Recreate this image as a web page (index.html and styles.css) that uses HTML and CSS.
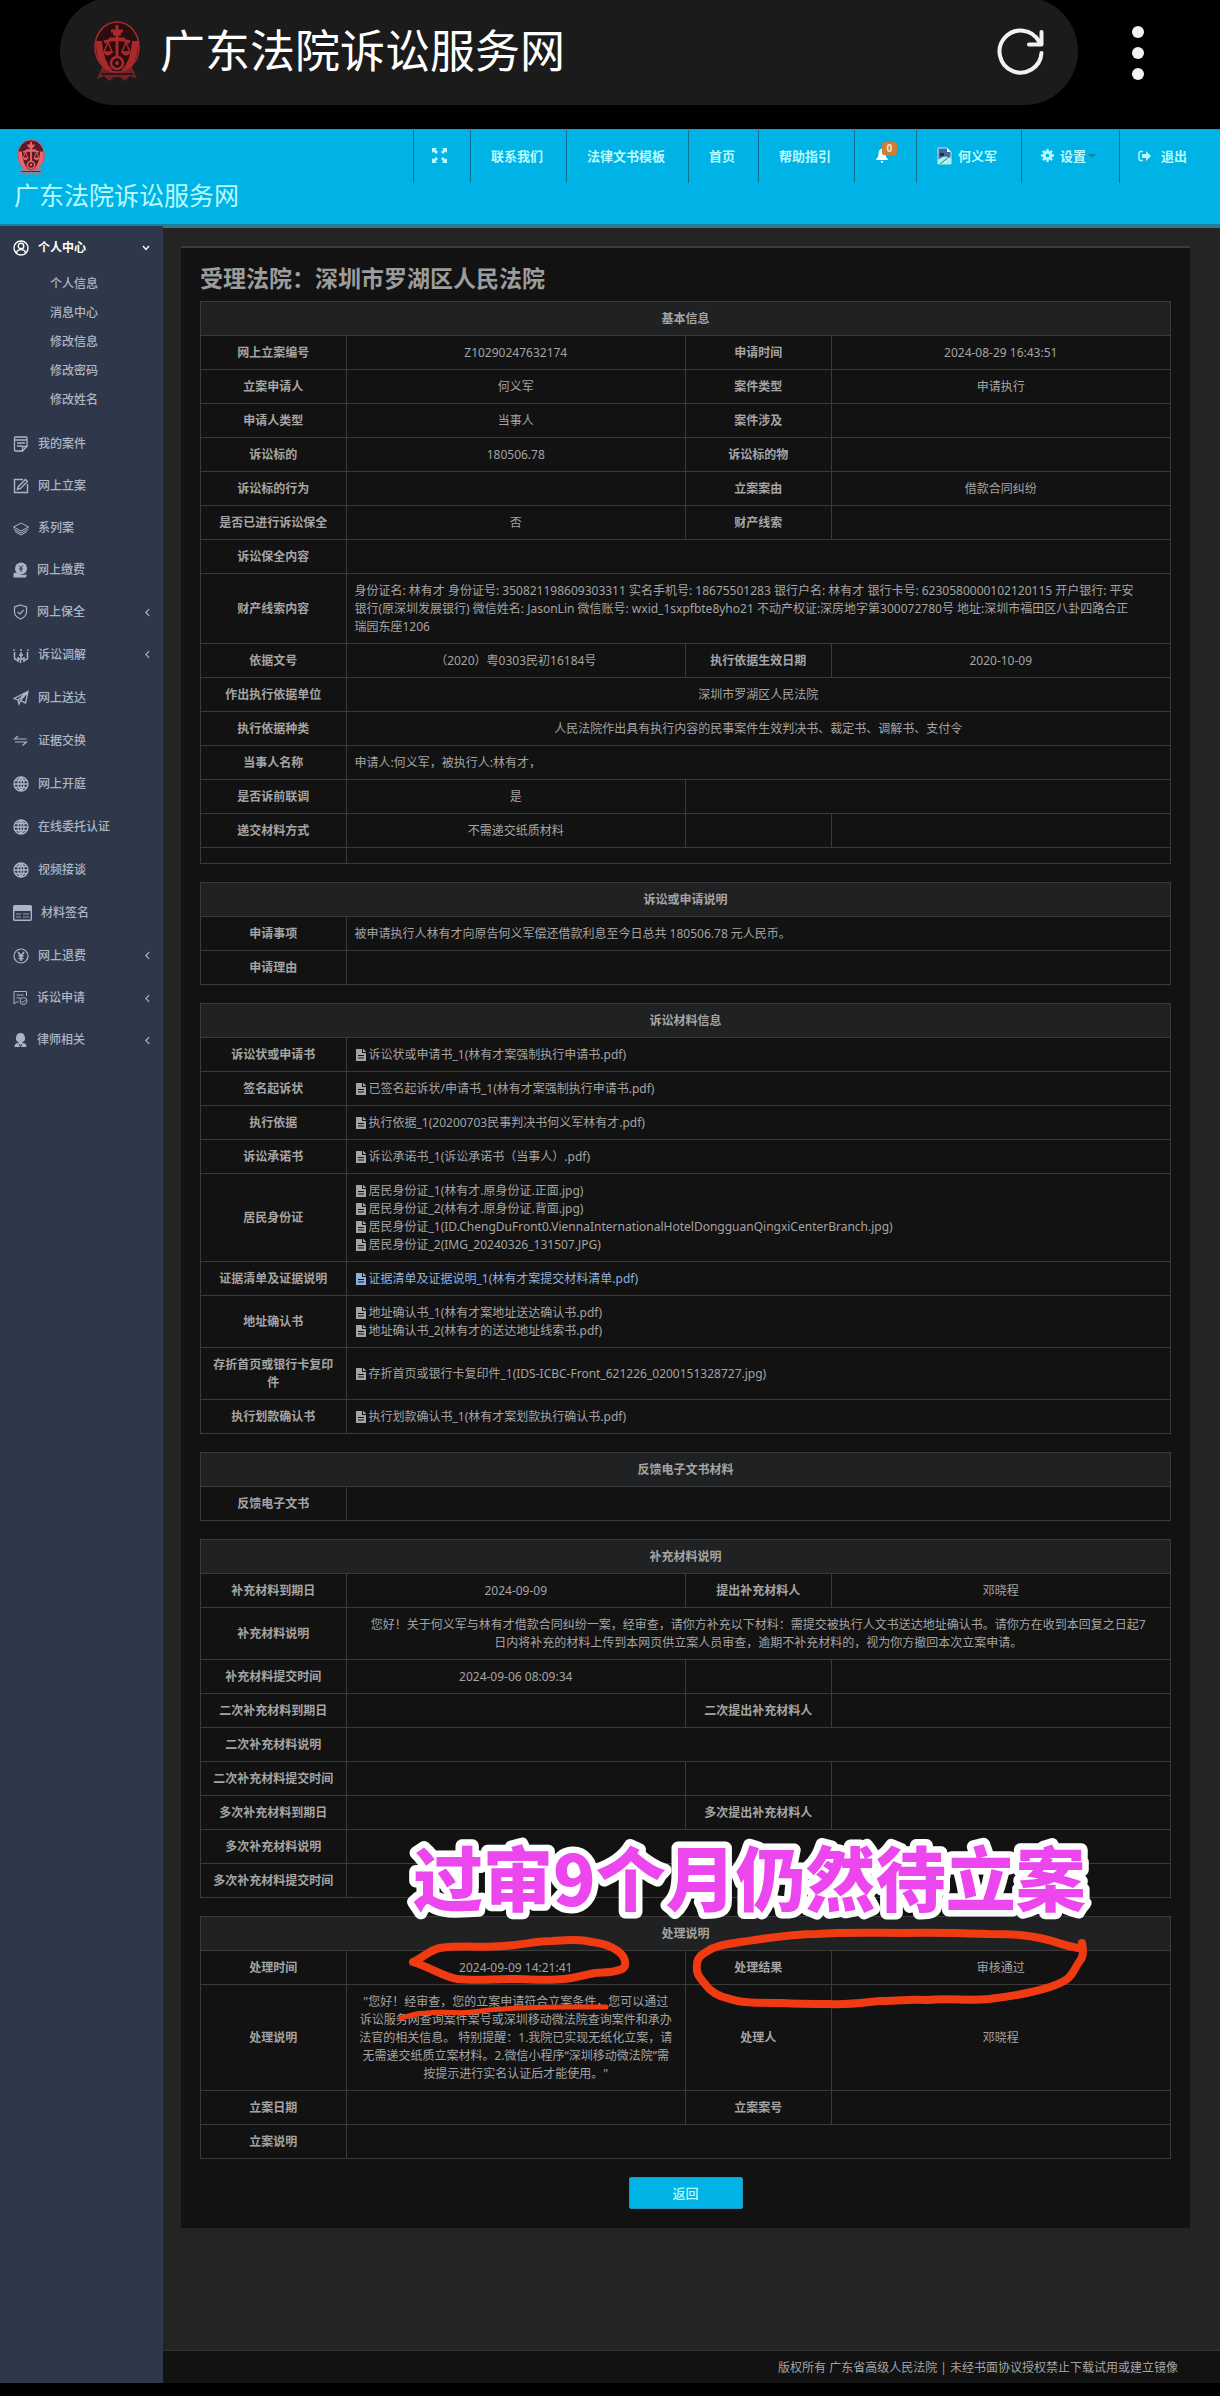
FILE: index.html
```html
<!DOCTYPE html>
<html lang="zh-CN">
<head>
<meta charset="utf-8">
<title>广东法院诉讼服务网</title>
<meta name="viewport" content="width=device-width, initial-scale=1">
<link rel="stylesheet" href="styles.css">
</head>
<body>
<svg width="0" height="0" class="defs" aria-hidden="true">
  <symbol id="emblem" viewBox="0 0 50 64">
    <path d="M10 48 L5 60 L12 57 L17 62 L22 58 H28 L33 62 L38 57 L45 60 L40 48Z" fill="currentColor" opacity=".6"/>
    <ellipse cx="25" cy="28" rx="22" ry="25" class="ground" stroke="currentColor" stroke-width="1.5"/>
    <path d="M4 22 Q3 48 21 52 Q11 42 10 22Z M46 22 Q47 48 29 52 Q39 42 40 22Z" fill="currentColor"/>
    <path d="M25 6 V42 M19 12 H31 M17 20 H33 M12 23 Q25 18 38 23 M21 15 H29" stroke="currentColor" stroke-width="3" fill="none"/>
    <path d="M16 23 L12 33 H20Z M34 23 L30 33 H38Z" stroke="currentColor" stroke-width="1.5" fill="none"/>
    <path d="M11 33 H21 Q16 40 11 33Z M29 33 H39 Q34 40 29 33Z" fill="currentColor"/>
    <circle cx="25" cy="44" r="6" class="ground" stroke="currentColor" stroke-width="2.5"/>
    <circle cx="25" cy="44" r="2" fill="currentColor"/>
    <path d="M9 55 H41" class="seam" stroke-width="1.5" fill="none"/>
  </symbol>
  <symbol id="file" viewBox="0 0 12 14">
    <path d="M1 1H7V5H11V13H1Z M8 0.6L11.4 4H8Z" fill="currentColor"/>
    <path d="M3 7.5H9M3 10H9" stroke="#121212" stroke-width="1"/>
  </symbol>
  <symbol id="globe" viewBox="0 0 16 16">
    <path d="M8 1a7 7 0 1 0 0 14A7 7 0 0 0 8 1ZM1 8H15M2 4.5H14M2 11.5H14M8 1V15M8 1C4 4 4 12 8 15M8 1C12 4 12 12 8 15" fill="none" stroke="currentColor" stroke-width="1.3"/>
  </symbol>
  <symbol id="chev" viewBox="0 0 6 10"><path d="M5 1L1 5L5 9" fill="none" stroke="currentColor" stroke-width="1.4"/></symbol>
</svg>

<div class="browser">
  <div class="pill">
    <svg class="fav"><use href="#emblem"/></svg>
    <span class="site">广东法院诉讼服务网</span>
    <button class="plain" aria-label="刷新">
      <svg width="50" height="50" viewBox="0 0 50 50" fill="none" stroke="#f2f2f2" stroke-width="4" stroke-linecap="round" stroke-linejoin="round"><path d="M45.500 27A21 21 0 1 1 43 15.500M45.500 6V18.500H33"/></svg>
    </button>
  </div>
  <button class="plain more" aria-label="菜单">
    <svg width="14" height="56" viewBox="0 0 14 56" fill="#f2f2f2"><circle cx="7" cy="7" r="6"/><circle cx="7" cy="28" r="6"/><circle cx="7" cy="49" r="6"/></svg>
  </button>
</div>

<header class="top">
  <a class="brand" href="#">
    <svg class="logo"><use href="#emblem"/></svg>
    <span>广东法院诉讼服务网</span>
  </a>
  <nav class="menu">
    <a href="#" class="full" aria-label="全屏"><svg width="15" height="15" viewBox="0 0 15 15" fill="currentColor"><path d="M0 0H5L3.500 1.500L6 4L4 6L1.500 3.500L0 5ZM15 0H10L11.500 1.500L9 4L11 6L13.500 3.500L15 5ZM0 15H5L3.500 13.500L6 11L4 9L1.500 11.500L0 10ZM15 15H10L11.500 13.500L9 11L11 9L13.500 11.500L15 10Z"/></svg></a>
    <a href="#">联系我们</a>
    <a href="#">法律文书模板</a>
    <a href="#">首页</a>
    <a href="#">帮助指引</a>
    <a href="#" class="bell" aria-label="消息"><svg width="14" height="15" viewBox="0 0 14 15" fill="currentColor"><path d="M7 0.500C9.500 1 10.500 3 10.500 6C10.500 9 12 10.500 13.500 12H0.500C2 10.500 3.500 9 3.500 6C3.500 3 4.500 1 7 0.500ZM5.500 13H8.500Q8 15 7 15T5.500 13Z"/></svg><span class="badge">0</span></a>
    <a href="#" class="user"><svg width="18" height="18" viewBox="0 0 18 18"><path d="M3 1H12L16 5V17H3Z" fill="#41679c" stroke="#b5f4f8"/><path d="M12 1V5H16Z" fill="#fff"/><path d="M5 6H9V9H5Z" fill="#14315e"/><path d="M3 13Q9 7 16 11V17H3Z" fill="#a9f4ee"/><path d="M5 17L15 9" stroke="#2b7d99"/></svg>何义军</a>
    <a href="#" class="set"><svg width="13" height="13" viewBox="0 0 14 14"><circle cx="7" cy="7" r="3.500" fill="none" stroke="currentColor" stroke-width="3"/><path d="M7 0V3M7 11V14M0 7H3M11 7H14M2 2L4 4M10 10L12 12M12 2L10 4M2 12L4 10" stroke="currentColor" stroke-width="2.600"/></svg>设置<i class="caret"></i></a>
    <a href="#" class="exit"><svg width="13" height="12" viewBox="0 0 13 12"><path d="M5 1.500H2.500Q1 1.500 1 3V9Q1 10.500 2.500 10.500H5" fill="none" stroke="currentColor" stroke-width="1.400"/><path d="M4 4H8V1L13 6L8 11V8H4Z" fill="currentColor"/></svg>退出</a>
  </nav>
</header>

<div class="layout">
  <aside class="side">
    <ul class="nav">
      <li class="open"><a href="#"><svg class="ic" viewBox="0 0 16 16" fill="none" stroke="currentColor" stroke-width="1.400"><circle cx="8" cy="8" r="7"/><circle cx="8" cy="6" r="2.800"/><path d="M3.500 13C4 8.500 12 8.500 12.500 13"/></svg>个人中心<svg class="down" viewBox="0 0 8 6"><path d="M1 1L4 4.500L7 1" fill="none" stroke="currentColor" stroke-width="1.300"/></svg></a>
        <ul class="sub">
          <li><a href="#">个人信息</a></li>
          <li><a href="#">消息中心</a></li>
          <li><a href="#">修改信息</a></li>
          <li><a href="#">修改密码</a></li>
          <li><a href="#">修改姓名</a></li>
        </ul>
      </li>
      <li><a href="#"><svg class="ic" viewBox="0 0 16 16" fill="none" stroke="currentColor" stroke-width="1.300"><path d="M10 15H2.500Q1.500 15 1.500 14V2Q1.500 1 2.500 1H13Q14 1 14 2V10.500M1.500 4H14M4 7H12M4 10H9M9.500 15L14 10.500H9.500Z"/></svg>我的案件</a></li>
      <li><a href="#"><svg class="ic" viewBox="0 0 16 16" fill="none" stroke="currentColor" stroke-width="1.400"><path d="M10 1.500H1.500V14.500H14.500V6M4.500 11.500L5.500 8.500L12.500 1.500L14.500 3.500L7.500 10.500Z"/></svg>网上立案</a></li>
      <li><a href="#"><svg class="ic" viewBox="0 0 16 16" fill="none" stroke="currentColor"><path d="M8 3L15.500 7L8 11L.5 7ZM.5 9L8 13L15.500 9M2 11.500L8 15L14 11.500"/></svg>系列案</a></li>
      <li><a href="#"><svg class="ic narrow" viewBox="0 0 14 16"><circle cx="7.500" cy="6.500" r="6" fill="currentColor"/><path d="M5.500 3.500L7.500 6L9.500 3.500M7.500 6V10M5.500 7H9.500" fill="none" stroke="#2f384a"/><path d="M0 11Q4 10 8 13L13 12.500Q14 14 12 15.500H0Z" fill="currentColor"/></svg>网上缴费</a></li>
      <li><a href="#"><svg class="ic narrow" viewBox="0 0 14 16" fill="none" stroke="currentColor" stroke-width="1.200"><path d="M7 1L13 3V8Q13 12.500 7 15Q1 12.500 1 8V3ZM4 8L6.500 10L10 6"/></svg>网上保全<svg class="left"><use href="#chev"/></svg></a></li>
      <li class="tall"><a href="#"><svg class="ic" viewBox="0 0 16 16" fill="none" stroke="currentColor" stroke-width="1.500"><path d="M1.500 5V11Q1.500 13 5 13V15M14.500 5V11Q14.500 13 11 13V15M5 10V12H11V10M8 5V12M6 8H10M7.500 13V16M1 2.500V4M15 2.500V4M8 2V4"/></svg>诉讼调解<svg class="left"><use href="#chev"/></svg></a></li>
      <li class="tall"><a href="#"><svg class="ic" viewBox="0 0 16 16" fill="none" stroke="currentColor" stroke-width="1.300"><path d="M1 8.500L15 1.500L12.500 13L7.500 10.500L6 14L5 10ZM5 10L15 1.500L7.500 10.500"/></svg>网上送达</a></li>
      <li class="tall"><a href="#"><svg class="ic" viewBox="0 0 16 16" fill="none" stroke="currentColor" stroke-width="1.200"><path d="M13.500 6H1.500L5 3M2 9H13.500L9.500 12.500"/></svg>证据交换</a></li>
      <li class="tall"><a href="#"><svg class="ic"><use href="#globe"/></svg>网上开庭</a></li>
      <li class="tall"><a href="#"><svg class="ic"><use href="#globe"/></svg>在线委托认证</a></li>
      <li class="tall"><a href="#"><svg class="ic"><use href="#globe"/></svg>视频接谈</a></li>
      <li class="tall"><a href="#"><svg class="ic wide" viewBox="0 0 19 16"><rect x=".7" y=".7" width="17.600" height="14.600" rx="1" fill="none" stroke="currentColor" stroke-width="1.400"/><path d="M0 1H19V6H0Z" fill="currentColor"/><path d="M3 9H8M10 9H16M3 12H8M10 12H16" stroke="currentColor" stroke-width=".8"/></svg>材料签名</a></li>
      <li class="tall"><a href="#"><svg class="ic" viewBox="0 0 16 16" fill="none" stroke="currentColor" stroke-width="1.200"><circle cx="8" cy="8" r="7"/><path d="M5 4L8 8L11 4M8 8V13M5.500 8H10.500M5.500 10.500H10.500" stroke-width="1.600"/></svg>网上退费<svg class="left"><use href="#chev"/></svg></a></li>
      <li><a href="#"><svg class="ic narrow" viewBox="0 0 14 16" fill="none" stroke="currentColor"><path d="M13 6V1.500H.5V14L3 12H5M3 5H10M3 8H7"/><circle cx="10" cy="11" r="3.500"/><path d="M8 11L9.500 12.500L12 10"/></svg>诉讼申请<svg class="left"><use href="#chev"/></svg></a></li>
      <li><a href="#"><svg class="ic narrow" viewBox="0 0 14 16" fill="currentColor"><path d="M7 1Q11 1 11.500 6Q12 9 9 10V11Q13 11 13 15H1Q1 11 5 11V10Q2 9 2.500 6Q3 1 7 1Z"/><path d="M5.500 12L7 15L8.500 12" fill="none" stroke="#2f384a"/></svg>律师相关<svg class="left"><use href="#chev"/></svg></a></li>
    </ul>
  </aside>

  <div class="content">
    <main class="panel">
      <h1>受理法院：深圳市罗湖区人民法院</h1>

      <table class="info">
        <colgroup><col class="k"><col class="v"><col class="k"><col class="v"></colgroup>
        <thead><tr><th colspan="4">基本信息</th></tr></thead>
        <tbody>
        <tr><th>网上立案编号</th><td>Z10290247632174</td><th>申请时间</th><td>2024-08-29 16:43:51</td></tr>
        <tr><th>立案申请人</th><td>何义军</td><th>案件类型</th><td>申请执行</td></tr>
        <tr><th>申请人类型</th><td>当事人</td><th>案件涉及</th><td></td></tr>
        <tr><th>诉讼标的</th><td>180506.78</td><th>诉讼标的物</th><td></td></tr>
        <tr><th>诉讼标的行为</th><td></td><th>立案案由</th><td>借款合同纠纷</td></tr>
        <tr><th>是否已进行诉讼保全</th><td>否</td><th>财产线索</th><td></td></tr>
        <tr><th>诉讼保全内容</th><td colspan="3"></td></tr>
        <tr><th>财产线索内容</th><td colspan="3" class="l">身份证名: 林有才 身份证号: 350821198609303311 实名手机号: 18675501283 银行户名: 林有才 银行卡号: 6230580000102120115 开户银行: 平安<br>银行(原深圳发展银行) 微信姓名: JasonLin 微信账号: wxid_1sxpfbte8yho21 不动产权证:深房地字第300072780号 地址:深圳市福田区八卦四路合正<br>瑞园东座1206</td></tr>
        <tr><th>依据文号</th><td>（2020）粤0303民初16184号</td><th>执行依据生效日期</th><td>2020-10-09</td></tr>
        <tr><th>作出执行依据单位</th><td colspan="3">深圳市罗湖区人民法院</td></tr>
        <tr><th>执行依据种类</th><td colspan="3">人民法院作出具有执行内容的民事案件生效判决书、裁定书、调解书、支付令</td></tr>
        <tr><th>当事人名称</th><td colspan="3" class="l">申请人:何义军，被执行人:林有才，</td></tr>
        <tr><th>是否诉前联调</th><td>是</td><td colspan="2"></td></tr>
        <tr><th>递交材料方式</th><td>不需递交纸质材料</td><th></th><td></td></tr>
        <tr class="slim"><th></th><td colspan="3"></td></tr>
        </tbody>
      </table>

      <table class="info">
        <colgroup><col class="k"><col></colgroup>
        <thead><tr><th colspan="2">诉讼或申请说明</th></tr></thead>
        <tbody>
        <tr><th>申请事项</th><td class="l">被申请执行人林有才向原告何义军偿还借款利息至今日总共 180506.78 元人民币。</td></tr>
        <tr><th>申请理由</th><td></td></tr>
        </tbody>
      </table>

      <table class="info">
        <colgroup><col class="k"><col></colgroup>
        <thead><tr><th colspan="2">诉讼材料信息</th></tr></thead>
        <tbody>
        <tr><th>诉讼状或申请书</th><td class="l"><a href="#"><svg><use href="#file"/></svg>诉讼状或申请书_1(林有才案强制执行申请书.pdf)</a></td></tr>
        <tr><th>签名起诉状</th><td class="l"><a href="#"><svg><use href="#file"/></svg>已签名起诉状/申请书_1(林有才案强制执行申请书.pdf)</a></td></tr>
        <tr><th>执行依据</th><td class="l"><a href="#"><svg><use href="#file"/></svg>执行依据_1(20200703民事判决书何义军林有才.pdf)</a></td></tr>
        <tr><th>诉讼承诺书</th><td class="l"><a href="#"><svg><use href="#file"/></svg>诉讼承诺书_1(诉讼承诺书（当事人）.pdf)</a></td></tr>
        <tr><th>居民身份证</th><td class="l"><a href="#"><svg><use href="#file"/></svg>居民身份证_1(林有才.原身份证.正面.jpg)</a><a href="#"><svg><use href="#file"/></svg>居民身份证_2(林有才.原身份证.背面.jpg)</a><a href="#"><svg><use href="#file"/></svg>居民身份证_1(ID.ChengDuFront0.ViennaInternationalHotelDongguanQingxiCenterBranch.jpg)</a><a href="#"><svg><use href="#file"/></svg>居民身份证_2(IMG_20240326_131507.JPG)</a></td></tr>
        <tr><th>证据清单及证据说明</th><td class="l"><a href="#" class="hit"><svg><use href="#file"/></svg>证据清单及证据说明_1(林有才案提交材料清单.pdf)</a></td></tr>
        <tr><th>地址确认书</th><td class="l"><a href="#"><svg><use href="#file"/></svg>地址确认书_1(林有才案地址送达确认书.pdf)</a><a href="#"><svg><use href="#file"/></svg>地址确认书_2(林有才的送达地址线索书.pdf)</a></td></tr>
        <tr><th>存折首页或银行卡复印件</th><td class="l"><a href="#"><svg><use href="#file"/></svg>存折首页或银行卡复印件_1(IDS-ICBC-Front_621226_0200151328727.jpg)</a></td></tr>
        <tr><th>执行划款确认书</th><td class="l"><a href="#"><svg><use href="#file"/></svg>执行划款确认书_1(林有才案划款执行确认书.pdf)</a></td></tr>
        </tbody>
      </table>

      <table class="info">
        <colgroup><col class="k"><col></colgroup>
        <thead><tr><th colspan="2">反馈电子文书材料</th></tr></thead>
        <tbody><tr><th>反馈电子文书</th><td></td></tr></tbody>
      </table>

      <table class="info">
        <colgroup><col class="k"><col class="v"><col class="k"><col class="v"></colgroup>
        <thead><tr><th colspan="4">补充材料说明</th></tr></thead>
        <tbody>
        <tr><th>补充材料到期日</th><td>2024-09-09</td><th>提出补充材料人</th><td>邓晓程</td></tr>
        <tr><th>补充材料说明</th><td colspan="3">您好！关于何义军与林有才借款合同纠纷一案，经审查，请你方补充以下材料：需提交被执行人文书送达地址确认书。请你方在收到本回复之日起7<br>日内将补充的材料上传到本网页供立案人员审查，逾期不补充材料的，视为你方撤回本次立案申请。</td></tr>
        <tr><th>补充材料提交时间</th><td>2024-09-06 08:09:34</td><th></th><td></td></tr>
        <tr><th>二次补充材料到期日</th><td></td><th>二次提出补充材料人</th><td></td></tr>
        <tr><th>二次补充材料说明</th><td colspan="3"></td></tr>
        <tr><th>二次补充材料提交时间</th><td></td><th></th><td></td></tr>
        <tr><th>多次补充材料到期日</th><td></td><th>多次提出补充材料人</th><td></td></tr>
        <tr><th>多次补充材料说明</th><td colspan="3"></td></tr>
        <tr><th>多次补充材料提交时间</th><td colspan="3"></td></tr>
        </tbody>
      </table>

      <section class="result">
        <table class="info">
          <colgroup><col class="k"><col class="v"><col class="k"><col class="v"></colgroup>
          <thead><tr><th colspan="4">处理说明</th></tr></thead>
          <tbody>
          <tr><th>处理时间</th><td>2024-09-09 14:21:41</td><th>处理结果</th><td>审核通过</td></tr>
          <tr><th>处理说明</th><td>"您好！经审查，您的立案申请符合立案条件，您可以通过<br>诉讼服务网查询案件案号或深圳移动微法院查询案件和承办<br>法官的相关信息。 特别提醒：1.我院已实现无纸化立案，请<br>无需递交纸质立案材料。2.微信小程序“深圳移动微法院”需<br>按提示进行实名认证后才能使用。"</td><th>处理人</th><td>邓晓程</td></tr>
          <tr><th>立案日期</th><td></td><th>立案案号</th><td></td></tr>
          <tr><th>立案说明</th><td colspan="3"></td></tr>
          </tbody>
        </table>
        <svg class="marks" width="900" height="110" viewBox="0 0 900 110" fill="none" stroke="#f03a12" stroke-width="8" stroke-linecap="round" stroke-linejoin="round">
          <path d="M213 46C222 42 230 34 240 32C262 29 280 32 303 30C322 29 336 25 352 25C368 24 380 23 392 26C408 28 420 34 424 42C427 50 424 53 419 54C412 57 404 56 395 57C384 59 376 62 364 63C348 65 330 63 314 63C292 63 274 65 257 63C242 60 232 52 213 46Z"/>
          <path d="M201 102C209 100 216 97 226 97C246 95 258 98 272 96C284 95 292 93 303 93C326 91 350 91 372 91L406 91" stroke-width="5"/>
          <path d="M882 27C884 36 883 42 879 46C874 54 871 62 864 65C846 75 814 80 789 83C768 85 748 82 727 84C708 83 694 85 679 85C660 87 648 89 630 88C612 88 600 88 582 87C560 87 540 87 530 83C516 80 509 74 505 68C498 60 496 56 497 49C497 42 501 39 506 36C516 29 528 28 541 26C568 22 590 18 617 18C646 16 674 17 703 17C732 16 760 17 789 18C806 18 822 18 834 21C850 23 864 30 878 32"/>
          <text class="callout" x="213" y="-10">过审9个月仍然待立案</text>
        </svg>
      </section>

      <div class="actions"><button class="back">返回</button></div>
    </main>
    <footer>版权所有 广东省高级人民法院 | 未经书面协议授权禁止下载试用或建立镜像</footer>
  </div>
</div>
</body>
</html>
```
FILE: styles.css
```css
* { box-sizing: border-box; }
body {
  margin: 0;
  padding-bottom: 13px;
  background: #000;
  color: #a4a4a4;
  font: 12px/18px "Noto Sans", "Noto Sans CJK SC", sans-serif;
}
a { color: inherit; text-decoration: none; }
ul { list-style: none; margin: 0; padding: 0; }
.defs { position: absolute; }

/* phone browser bar */
.browser { display: flex; height: 129px; padding: 0 75px 24px 60px; align-items: stretch; }
.pill {
  flex: 1;
  display: flex;
  align-items: center;
  margin-right: 53px;
  margin-top: -3px;
  padding: 0 32px;
  border-radius: 54px;
  background: #1b1b1b;
}
.ground { fill: var(--ground); }
.seam { stroke: var(--ground); }
.fav { width: 50px; height: 64px; color: #a8292c; --ground: #2c0d0f; }
.site { margin-left: 18px; color: #fff; font-size: 45px; line-height: 60px; }
.plain { display: block; padding: 0; border: 0; background: none; line-height: 0; }
.pill .plain { margin-left: auto; }
.more svg { display: block; }
.more { width: 14px; }

/* site header */
.top {
  display: flex;
  justify-content: space-between;
  height: 97px;
  background: #00b3e6;
  border-top: 1px solid #2d93b3;
  border-bottom: 2px solid #1583a5;
  color: #b8fbff;
}
.brand { display: flex; flex-direction: column; padding: 8px 0 0 14px; font-size: 25px; line-height: 36px; }
.logo { width: 34px; height: 39px; color: #e8666c; --ground: #5c1a22; }
.menu { display: flex; font-size: 13px; font-weight: 700; }
.menu a {
  position: relative;
  display: flex;
  align-items: center;
  height: 53px;
  padding: 0 23px 2px 20px;
  border-left: 1px solid #14708f;
}
.menu .full { padding: 0 23px 2px 18px; }
.menu .bell { width: 62px; color: #f4ffff; }
.menu .user { padding: 0 24px 2px 18px; gap: 5px; }
.menu .set { width: 98px; padding: 0 0 2px 19px; gap: 6px; }
.menu .exit { padding: 0 33px 2px 18px; gap: 10px; }
.badge {
  position: absolute;
  left: 27px;
  top: 12px;
  width: 15px;
  height: 13px;
  border-radius: 2px;
  background: #c8803c;
  color: #ffe7c4;
  font-size: 10px;
  line-height: 13px;
  text-align: center;
}
.caret { border: 4px solid transparent; border-top-color: #197f9e; border-bottom: 0; margin-left: -4px; }

/* columns */
.layout { display: flex; background: #242424; }
.side { width: 163px; flex: none; background: #2f384a; color: #adb5c4; font-weight: 500; }
.nav a { display: flex; align-items: center; gap: 9px; height: 42px; padding: 0 13px; }
.nav .tall > a { height: 43px; }
.nav .open > a { height: 43px; color: #fff; font-weight: 700; }
.ic { width: 16px; height: 16px; flex: none; }
.ic.narrow { width: 15px; }
.ic.wide { width: 19px; }
.down { width: 8px; height: 6px; margin-left: auto; }
.left { width: 5px; height: 9px; margin-left: auto; }
.sub { padding-bottom: 9px; }
.nav .sub a { height: 29px; padding-left: 50px; }

.content { flex: 1; min-width: 0; border-top: 2px solid #3f7583; }
.panel {
  margin: 18px 30px 122px 18px;
  padding: 13px 19px 19px;
  border-top: 2px solid #3c3c3c;
  background: #121212;
}
h1 { margin: 0 0 6px; font-size: 23px; line-height: 34px; font-weight: 700; color: #9c9c9c; }

/* data tables */
.info {
  width: 100%;
  margin-bottom: 18px;
  border-collapse: collapse;
  table-layout: fixed;
  text-align: center;
}
.info .k { width: 15%; }
.info .v { width: 35%; }
.info th, .info td { height: 34px; padding: 8px 8px 7px; border: 1px solid #3a3a3a; }
.info th { font-weight: 600; }
.info thead th { background: #202123; }
.info .slim th, .info .slim td { height: 16px; padding: 0; }
.info .l { text-align: left; }
.info a { display: flex; align-items: center; gap: 2px; }
.info a svg { width: 12px; height: 14px; flex: none; }
.info .hit { color: #8fb0dc; }

/* handwritten notes over the last table */
.result { position: relative; }
.marks { position: absolute; left: 0; top: 0; overflow: visible; }
.callout {
  fill: #ec46ee;
  stroke: #fff;
  stroke-width: 13px;
  stroke-linejoin: round;
  paint-order: stroke fill;
  font: 900 70px "Noto Sans CJK SC", sans-serif;
}

.actions { display: flex; justify-content: center; }
.back {
  width: 114px;
  height: 32px;
  border: 1px solid #2695b5;
  border-radius: 2px;
  background: #00b3e6;
  color: #b8fbff;
  font: inherit;
  font-size: 13px;
  font-weight: 500;
}
footer { padding: 8px 42px 6px; border-top: 1px solid #333; background: #121212; text-align: right; }
```
